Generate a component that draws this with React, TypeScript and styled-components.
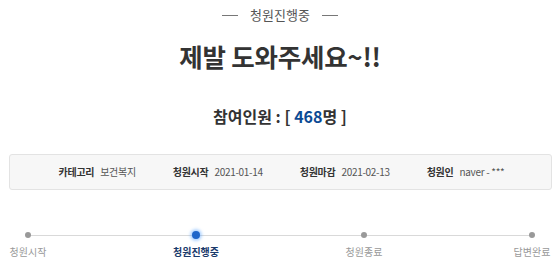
import React from "react";
import styled, { createGlobalStyle } from "styled-components";

const Global = createGlobalStyle`
  html, body { margin: 0; padding: 0; background: #fff; }
  body { font-family: "Noto Sans CJK KR", "Noto Sans", sans-serif; color: #333; }
`;

const Page = styled.div`
  width: 560px;
  height: 275px;
  overflow: hidden;
  display: flex;
  flex-direction: column;
  align-items: center;
`;

const Status = styled.div`
  margin-top: 6px;
  display: flex;
  align-items: center;
  gap: 12px;
  font-size: 13px;
  line-height: 18px;
  color: #555;
  &::before, &::after {
    content: "";
    width: 16px;
    height: 1px;
    background: #777;
  }
`;

const Title = styled.h1`
  margin: 14px 0 0;
  font-size: 25.5px;
  line-height: 36px;
  font-weight: 700;
  color: #333;
  letter-spacing: -0.2px;
`;

const Count = styled.div`
  margin-top: 31px;
  font-size: 16px;
  line-height: 22px;
  font-weight: 700;
  color: #333;
`;

const Num = styled.span`
  color: #0b4a94;
`;

const InfoBox = styled.div`
  align-self: stretch;
  margin: 27px 8px 0 9px;
  height: 36px;
  box-sizing: border-box;
  border: 1px solid #e3e3e3;
  border-radius: 3px;
  background: #f7f7f7;
  display: flex;
  align-items: center;
  justify-content: center;
  gap: 37px;
  padding-left: 2px;
`;

const Item = styled.div`
  display: flex;
  align-items: baseline;
  gap: 6px;
  font-size: 10px;
  line-height: 16px;
  color: #555;
  letter-spacing: -0.3px;
`;

const Label = styled.span`
  font-weight: 700;
  color: #333;
`;

const Timeline = styled.div`
  align-self: stretch;
  margin: 40px 0 0;
  padding: 0 5px;
  display: flex;
  justify-content: space-between;
  position: relative;
  &::before {
    content: "";
    position: absolute;
    left: 27px;
    right: 26px;
    top: 5px;
    height: 1px;
    background: #d9d9d9;
  }
`;

const Step = styled.div`
  width: 46px;
  display: flex;
  flex-direction: column;
  align-items: center;
  gap: 5px;
  position: relative;
`;

const Dot = styled.span<{ $active?: boolean }>`
  width: ${(p) => (p.$active ? 8 : 6)}px;
  height: ${(p) => (p.$active ? 8 : 6)}px;
  margin-top: ${(p) => (p.$active ? 1 : 2)}px;
  margin-bottom: ${(p) => (p.$active ? 0 : 1)}px;
  border-radius: 50%;
  background: ${(p) => (p.$active ? "#1f66c9" : "#999")};
  box-shadow: ${(p) => (p.$active ? "0 0 3px 2px rgba(80,160,255,0.45)" : "none")};
`;

const StepLabel = styled.span<{ $active?: boolean }>`
  font-size: 10px;
  line-height: 16px;
  white-space: nowrap;
  font-weight: ${(p) => (p.$active ? 700 : 400)};
  color: ${(p) => (p.$active ? "#1a3a6b" : "#999")};
`;

const steps = [
  { label: "청원시작" },
  { label: "청원진행중", active: true },
  { label: "청원종료" },
  { label: "답변완료" },
];

export default function App() {
  return (
    <Page>
      <Global />
      <Status>청원진행중</Status>
      <Title>제발 도와주세요~!!</Title>
      <Count>
        참여인원 : [ <Num>468</Num>명 ]
      </Count>
      <InfoBox>
        <Item>
          <Label>카테고리</Label>보건복지
        </Item>
        <Item>
          <Label>청원시작</Label>2021-01-14
        </Item>
        <Item>
          <Label>청원마감</Label>2021-02-13
        </Item>
        <Item>
          <Label>청원인</Label>naver - ***
        </Item>
      </InfoBox>
      <Timeline>
        {steps.map((s) => (
          <Step key={s.label}>
            <Dot $active={s.active} />
            <StepLabel $active={s.active}>{s.label}</StepLabel>
          </Step>
        ))}
      </Timeline>
    </Page>
  );
}
